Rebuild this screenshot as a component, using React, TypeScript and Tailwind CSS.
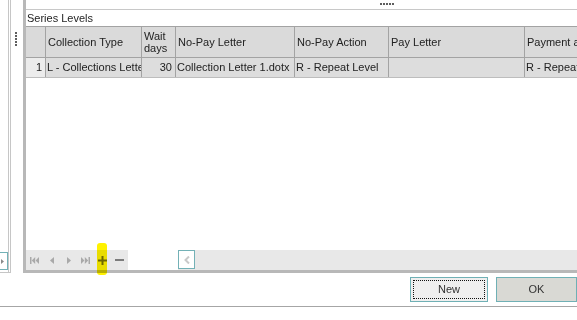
import React from 'react';

const cols = [
  { key: 'type', title: 'Collection Type', w: 'w-[96px]', value: 'L - Collections Letter' },
  { key: 'wait', title: 'Wait days', w: 'w-[34px]', value: '30', right: true },
  { key: 'npl', title: 'No-Pay Letter', w: 'w-[119px]', value: 'Collection Letter 1.dotx' },
  { key: 'npa', title: 'No-Pay Action', w: 'w-[94px]', value: 'R - Repeat Level' },
  { key: 'pl', title: 'Pay Letter', w: 'w-[136px]', value: '' },
  { key: 'pa', title: 'Payment action', w: 'w-[120px]', value: 'R - Repeat Level' },
];

function NavIcon({ kind }: { kind: string }) {
  const gray = '#a9a9a9';
  if (kind === 'first')
    return (
      <svg width="9" height="7" viewBox="0 0 9 7">
        <rect x="0" y="0" width="1.5" height="7" fill={gray} />
        <polygon points="5.2,0 1.8,3.5 5.2,7" fill={gray} />
        <polygon points="9,0 5.6,3.5 9,7" fill={gray} />
      </svg>
    );
  if (kind === 'prev')
    return (
      <svg width="4" height="7" viewBox="0 0 4 7">
        <polygon points="4,0 0,3.5 4,7" fill={gray} />
      </svg>
    );
  if (kind === 'next')
    return (
      <svg width="4" height="7" viewBox="0 0 4 7">
        <polygon points="0,0 4,3.5 0,7" fill={gray} />
      </svg>
    );
  if (kind === 'last')
    return (
      <svg width="9" height="7" viewBox="0 0 9 7">
        <polygon points="0,0 3.4,3.5 0,7" fill={gray} />
        <polygon points="3.8,0 7.2,3.5 3.8,7" fill={gray} />
        <rect x="7.5" y="0" width="1.5" height="7" fill={gray} />
      </svg>
    );
  if (kind === 'plus')
    return (
      <svg width="9" height="9" viewBox="0 0 9 9">
        <rect x="0" y="3.5" width="9" height="2" fill="#6e6e6e" />
        <rect x="3.5" y="0" width="2" height="9" fill="#6e6e6e" />
      </svg>
    );
  return (
    <svg width="9" height="2" viewBox="0 0 9 2">
      <rect x="0" y="0" width="9" height="2" fill="#7c7c7c" />
    </svg>
  );
}

export default function App() {
  return (
    <div className="relative w-[577px] h-[320px] overflow-hidden bg-white font-['Liberation_Sans',Arial,sans-serif] text-[11px] text-[#222]">
      <div className="flex h-[273px]">
        {/* left docked panel edge */}
        <div className="flex w-[23px] shrink-0">
          <div className="flex w-[11px] flex-col border-r border-b border-[#c6c6c6]">
            <div className="flex w-[9px] flex-1 flex-col border-r border-[#c6c6c6]">
              <div className="flex-1" />
              <div className="mb-[2px] flex h-[18px] w-[8px] items-center border-y border-r border-[#73b1b6] bg-white">
                <svg width="3" height="5" viewBox="0 0 3 5" className="ml-[1px]">
                  <polygon points="0,0 3,2.5 0,5" fill="#8a8a8a" />
                </svg>
              </div>
            </div>
          </div>
          <div className="flex flex-col gap-[1px] pt-[32px] pl-[4px]">
            {[0, 1, 2, 3, 4].map((i) => (
              <span key={i} className="h-[2px] w-[2px] bg-[#5e5e5e]" />
            ))}
          </div>
        </div>

        {/* grid panel */}
        <div className="flex min-w-0 flex-1 flex-col border-l-[3px] border-b-[3px] border-[#b8b8b8]">
          <div className="flex h-[10px] shrink-0 border-b border-[#c8c8c8] pl-[354px] pt-[3px]">
            <div className="flex gap-[1px]">
              {[0, 1, 2, 3, 4].map((i) => (
                <span key={i} className="h-[2px] w-[2px] bg-[#5e5e5e]" />
              ))}
            </div>
          </div>
          <div className="h-[16px] shrink-0 pl-[1px] leading-[16px] text-[#1e1e1e]">Series Levels</div>

          {/* header */}
          <div className="flex h-[32px] shrink-0 border-t border-b border-[#a3a3a3] bg-[#dadada]">
            <div className="w-[20px] shrink-0 border-r border-[#a3a3a3]" />
            {cols.map((c) => (
              <div
                key={c.key}
                className={`${c.w} flex shrink-0 items-center overflow-hidden whitespace-nowrap border-r border-[#a3a3a3] pl-[2px] leading-[12px]`}
              >
                {c.key === 'wait' ? (
                  <span className="whitespace-normal">
                    Wait
                    <br />
                    days
                  </span>
                ) : (
                  c.title
                )}
              </div>
            ))}
          </div>

          {/* data row */}
          <div className="flex h-[20px] shrink-0 border-b border-[#bdbdbd] bg-[#dddddd] leading-[19px]">
            <div className="w-[20px] shrink-0 border-r border-[#a3a3a3] bg-[#ececec] pr-[3px] text-right">1</div>
            {cols.map((c) => (
              <div
                key={c.key}
                className={`${c.w} shrink-0 overflow-hidden whitespace-nowrap border-r border-[#a3a3a3] ${c.right ? 'pr-[3px] text-right' : 'pl-[1px]'}`}
              >
                {c.value}
              </div>
            ))}
          </div>

          <div className="flex-1" />

          {/* navigator + scrollbar */}
          <div className="flex h-[20px] shrink-0">
            <div className="flex w-[102px] items-center bg-[#e8e8e8]">
              {['first', 'prev', 'next', 'last', 'plus', 'minus'].map((k) => (
                <div key={k} className="flex h-full w-[17px] items-center justify-center">
                  <NavIcon kind={k} />
                </div>
              ))}
            </div>
            <div className="w-[50px]" />
            <div className="flex flex-1 bg-[#e8e8e8]">
              <div className="flex h-[19px] w-[17px] items-center justify-center border border-[#73b1b6] bg-white">
                <svg width="6" height="8" viewBox="0 0 6 8">
                  <polyline points="5,0.5 1.5,4 5,7.5" fill="none" stroke="#c9c9c9" strokeWidth="2" />
                </svg>
              </div>
            </div>
          </div>
        </div>
      </div>

      {/* dialog buttons */}
      <div className="flex justify-end gap-[8px] pt-[4px]">
        <button className="relative flex h-[25px] w-[78px] items-center justify-center border border-[#6fb0b5] bg-[#efefef] text-[#333]">
          <span className="pointer-events-none absolute inset-[2px] border border-dotted border-[#111]" />
          New
        </button>
        <button className="flex h-[25px] w-[81px] items-center justify-center border border-[#6fb0b5] bg-[#d9d9d4] text-[#333]">
          OK
        </button>
      </div>
      <div className="mt-[4px] border-t border-[#a6a6a6]" />

      {/* marker highlight over the add button */}
      <div className="pointer-events-none absolute left-[97px] top-[243px] h-[32px] w-[10px] rounded-[3px] bg-[#fff200] mix-blend-multiply" />
    </div>
  );
}
